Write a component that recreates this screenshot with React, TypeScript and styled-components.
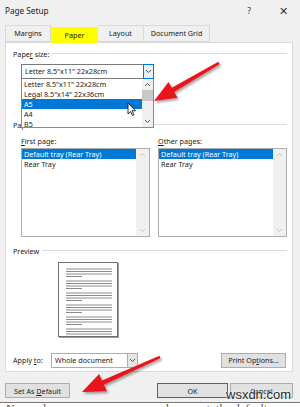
import styled, { createGlobalStyle } from "styled-components";

const GlobalStyle = createGlobalStyle`
  html, body { margin: 0; padding: 0; }
  body {
    background: #f0f0f0;
    font-family: "Noto Sans", "Open Sans", sans-serif;
    color: #1a1a1a;
  }
`;

const Dialog = styled.div`
  position: relative;
  width: 300px;
  height: 407px;
  overflow: hidden;
  background: #f0f0f0;
  display: flex;
  flex-direction: column;
  font-size: 7.2px;
  line-height: 10px;
`;

const TitleBar = styled.div`
  height: 22px;
  display: flex;
  align-items: center;
  padding-left: 5px;
  font-size: 8.2px;
`;

const TitleText = styled.span`
  flex: 1;
`;

const TitleButton = styled.span<{ big?: boolean }>`
  width: 34px;
  text-align: center;
  font-size: ${(p) => (p.big ? "11px" : "8.5px")};
  color: #333;
`;

const TabRow = styled.div`
  display: flex;
  height: 17px;
  margin-top: 3px;
  padding-left: 5px;
  position: relative;
  z-index: 1;
`;

const Tab = styled.div<{ active?: boolean; w: number }>`
  width: ${(p) => p.w}px;
  box-sizing: border-box;
  display: flex;
  align-items: center;
  justify-content: center;
  border: 1px solid #d9d9d9;
  border-left-width: 0;
  background: ${(p) => (p.active ? "#ffff00" : "#f0f0f0")};
  ${(p) =>
    p.active
      ? `margin-top: 2px; border: none; height: 16px; margin-bottom: -1px;`
      : ""}
  &:first-child {
    border-left-width: 1px;
  }
`;

const Panel = styled.div`
  margin: 0 7px 0 5px;
  height: 331px;
  box-sizing: border-box;
  border: 1px solid #d9d9d9;
  background: #fff;
  padding: 0 5px 0 7px;
  display: flex;
  flex-direction: column;
`;

const GroupHeader = styled.div<{ top: number }>`
  display: flex;
  align-items: center;
  gap: 3px;
  height: 10px;
  margin-top: ${(p) => p.top}px;
  white-space: nowrap;
  &::after {
    content: "";
    flex: 1;
    height: 1px;
    background: #dcdcdc;
  }
`;

const SelectWrap = styled.div<{ w: number; top?: number; indent?: number }>`
  position: relative;
  width: ${(p) => p.w}px;
  margin-top: ${(p) => p.top ?? 0}px;
  margin-left: ${(p) => p.indent ?? 0}px;
`;

const SelectBox = styled.div<{ focused?: boolean }>`
  height: 15px;
  box-sizing: border-box;
  border: 1px solid ${(p) => (p.focused ? "#7a7a7a" : "#adadad")};
  background: #fff;
  display: flex;
  align-items: center;
  padding-left: 3px;
`;

const SelectText = styled.span`
  flex: 1;
  white-space: nowrap;
`;

const SelectArrow = styled.div<{ focused?: boolean }>`
  width: 11px;
  height: 15px;
  margin: -1px -1px -1px 0;
  box-sizing: border-box;
  display: flex;
  align-items: center;
  justify-content: center;
  border: 1px solid ${(p) => (p.focused ? "#0078d7" : "#adadad")};
  background: ${(p) => (p.focused ? "#e5f1fb" : "#e5e5e5")};
`;

const DropList = styled.div`
  position: absolute;
  top: 15px;
  left: 0;
  width: 100%;
  height: 49px;
  box-sizing: border-box;
  border: 1px solid #8a8a8a;
  border-top: none;
  background: #fff;
  display: flex;
  overflow: hidden;
  z-index: 2;
`;

const ListItems = styled.div`
  flex: 1;
  display: flex;
  flex-direction: column;
`;

const Item = styled.div<{ selected?: boolean }>`
  height: 10px;
  line-height: 10px;
  padding-left: 2px;
  white-space: nowrap;
  flex-shrink: 0;
  background: ${(p) => (p.selected ? "#0078d7" : "transparent")};
  color: ${(p) => (p.selected ? "#fff" : "#1a1a1a")};
`;

const ScrollBar = styled.div<{ w: number }>`
  width: ${(p) => p.w}px;
  background: #f0f0f0;
  display: flex;
  flex-direction: column;
  align-items: center;
  justify-content: space-between;
`;

const ScrollBtn = styled.div`
  height: 11px;
  display: flex;
  align-items: center;
  justify-content: center;
`;

const Thumb = styled.div`
  width: 100%;
  height: 11px;
  background: #c8c8c8;
  margin-bottom: auto;
`;

const Columns = styled.div`
  display: flex;
  gap: 8px;
  margin-top: 6px;
  padding-left: 8px;
`;

const Column = styled.div`
  width: 129px;
  display: flex;
  flex-direction: column;
`;

const Label = styled.div`
  height: 10px;
  white-space: nowrap;
`;

const ListBox = styled.div`
  margin-top: 2px;
  height: 89px;
  box-sizing: border-box;
  border: 1px solid #adadad;
  display: flex;
`;

const PageThumb = styled.div`
  margin: 6px 0 0 45px;
  width: 60px;
  height: 75px;
  box-sizing: border-box;
  border: 1px solid #6f6f6f;
  box-shadow: 1px 1px 0 #9a9a9a;
  background: #fff;
`;

const ApplyRow = styled.div`
  display: flex;
  align-items: center;
  margin-top: 16px;
  height: 15px;
`;

const ApplyLabel = styled.span`
  width: 38px;
`;

const Button = styled.div<{ w: number; primary?: boolean; left?: number }>`
  width: ${(p) => p.w}px;
  height: 15px;
  box-sizing: border-box;
  margin-left: ${(p) => (p.left === undefined ? "0" : `${p.left}px`)};
  border: 1px solid ${(p) => (p.primary ? "#0078d7" : "#adadad")};
  background: #e1e1e1;
  display: flex;
  align-items: center;
  justify-content: center;
  white-space: nowrap;
`;

const PrintButton = styled(Button)`
  margin-left: auto;
  margin-right: 1px;
`;

const Footer = styled.div`
  display: flex;
  margin-top: 11px;
  gap: 2px;
`;

const BottomStrip = styled.div`
  margin-top: 4px;
  height: 4px;
  overflow: hidden;
  background: #fff;
  border-top: 1px solid #777;
  font-family: "Liberation Serif", serif;
  font-size: 12px;
  line-height: 12px;
  color: #555;
  padding-left: 6px;
  white-space: nowrap;
`;

const Overlay = styled.svg`
  position: absolute;
  left: 0;
  top: 0;
  pointer-events: none;
  z-index: 5;
`;

const Watermark = styled.div`
  position: absolute;
  left: 226px;
  top: 387px;
  font-family: "Liberation Sans", sans-serif;
  font-size: 13px;
  line-height: 15px;
  color: #2a2a2a;
  text-shadow: 0 0 2px #fff, 0 0 2px #fff;
  z-index: 6;
`;

const Chevron = ({ up, color = "#555" }: { up?: boolean; color?: string }) => (
  <svg width="7" height="5" viewBox="0 0 7 5">
    <polyline
      points={up ? "1,4 3.5,1.5 6,4" : "1,1 3.5,3.5 6,1"}
      fill="none"
      stroke={color}
      strokeWidth="1"
    />
  </svg>
);

const arrowPoints = (
  tx: number, ty: number, hx: number, hy: number,
  head: number, wing: number, shaft: number, tail: number
) => {
  const dx = hx - tx;
  const dy = hy - ty;
  const len = Math.hypot(dx, dy);
  const ux = dx / len, uy = dy / len;
  const nx = -uy, ny = ux;
  const bx = hx - ux * head, by = hy - uy * head;
  const pts = [
    [tx + nx * tail, ty + ny * tail],
    [bx + nx * shaft, by + ny * shaft],
    [bx + nx * wing, by + ny * wing],
    [hx, hy],
    [bx - nx * wing, by - ny * wing],
    [bx - nx * shaft, by - ny * shaft],
    [tx - nx * tail, ty - ny * tail],
  ];
  return pts.map((p) => p.map((v) => v.toFixed(1)).join(",")).join(" ");
};

const U = styled.span`
  text-decoration: underline;
`;

const paperSizes = [
  'Letter 8.5"x11" 22x28cm',
  'Legal 8.5"x14" 22x36cm',
  "A5",
  "A4",
  "B5",
];

const trays = ["Default tray (Rear Tray)", "Rear Tray"];

const TrayList = () => (
  <ListBox>
    <ListItems>
      {trays.map((t, i) => (
        <Item key={t} selected={i === 0}>{t}</Item>
      ))}
    </ListItems>
    <ScrollBar w={13}>
      <ScrollBtn><Chevron up color="#c4c4c4" /></ScrollBtn>
      <ScrollBtn><Chevron color="#c4c4c4" /></ScrollBtn>
    </ScrollBar>
  </ListBox>
);

const PageLines = () => {
  const groups = [0, 12, 24, 36, 48, 60];
  return (
    <svg width="58" height="73" viewBox="0 0 58 73">
      {groups.map((g) => (
        <g key={g} stroke="#8a8a8a" strokeWidth="1">
          <line x1="7" x2="53" y1={6 + g} y2={6 + g} />
          <line x1="7" x2="53" y1={8.5 + g} y2={8.5 + g} />
          <line x1="7" x2="53" y1={11 + g} y2={11 + g} />
          {g < 60 && <line x1="7" x2="23" y1={13.5 + g} y2={13.5 + g} />}
        </g>
      ))}
    </svg>
  );
};

export default function App() {
  return (
    <Dialog>
      <GlobalStyle />
      <TitleBar>
        <TitleText>Page Setup</TitleText>
        <TitleButton>?</TitleButton>
        <TitleButton big>✕</TitleButton>
      </TitleBar>
      <TabRow>
        <Tab w={46}>Margins</Tab>
        <Tab w={47} active>Paper</Tab>
        <Tab w={46}>Layout</Tab>
        <Tab w={66}>Document Grid</Tab>
      </TabRow>
      <Panel>
        <GroupHeader top={6}>
          <span>Pape<U>r</U> size:</span>
        </GroupHeader>
        <SelectWrap w={133} top={5} indent={8}>
          <SelectBox focused>
            <SelectText>{paperSizes[0]}</SelectText>
            <SelectArrow focused><Chevron /></SelectArrow>
          </SelectBox>
          <DropList>
            <ListItems>
              {paperSizes.map((s) => (
                <Item key={s} selected={s === "A5"}>{s}</Item>
              ))}
            </ListItems>
            <ScrollBar w={11}>
              <ScrollBtn><Chevron up /></ScrollBtn>
              <Thumb />
              <ScrollBtn><Chevron /></ScrollBtn>
            </ScrollBar>
          </DropList>
        </SelectWrap>
        <GroupHeader top={41}>
          <span>Paper source</span>
        </GroupHeader>
        <Columns>
          <Column>
            <Label><U>F</U>irst page:</Label>
            <TrayList />
          </Column>
          <Column>
            <Label><U>O</U>ther pages:</Label>
            <TrayList />
          </Column>
        </Columns>
        <GroupHeader top={9}>
          <span>Preview</span>
        </GroupHeader>
        <PageThumb>
          <PageLines />
        </PageThumb>
        <ApplyRow>
          <ApplyLabel>Apply <U>t</U>o:</ApplyLabel>
          <SelectWrap w={87}>
            <SelectBox>
              <SelectText>Whole document</SelectText>
              <SelectArrow><Chevron /></SelectArrow>
            </SelectBox>
          </SelectWrap>
          <PrintButton w={65}><span>Print Op<U>t</U>ions...</span></PrintButton>
        </ApplyRow>
      </Panel>
      <Footer>
        <Button w={65} left={5}><span>Set As <U>D</U>efault</span></Button>
        <Button w={71} left={85} primary>OK</Button>
        <Button w={63}>Cancel</Button>
      </Footer>
      <BottomStrip>Now, whenever you open a new document, the default paper size will be applied</BottomStrip>
      <Overlay width="300" height="407" viewBox="0 0 300 407">
        <defs>
          <filter id="sh" x="-20%" y="-20%" width="140%" height="140%">
            <feDropShadow dx="1.5" dy="2" stdDeviation="1" floodColor="#000" floodOpacity="0.35" />
          </filter>
        </defs>
        <polygon points={arrowPoints(219, 63, 154, 101, 22, 9, 2.4, 1.4)} fill="#e8141b" filter="url(#sh)" />
        <polygon points={arrowPoints(160, 357, 82, 392, 23, 9.5, 2.4, 1.4)} fill="#e8141b" filter="url(#sh)" />
        <path
          d="M128 103 L128 114 L130.5 111.5 L132.5 115.5 L134 114.8 L132 110.8 L135.5 110.8 Z"
          fill="#fff"
          stroke="#000"
          strokeWidth="0.8"
        />
      </Overlay>
      <Watermark>wsxdn.com</Watermark>
    </Dialog>
  );
}
